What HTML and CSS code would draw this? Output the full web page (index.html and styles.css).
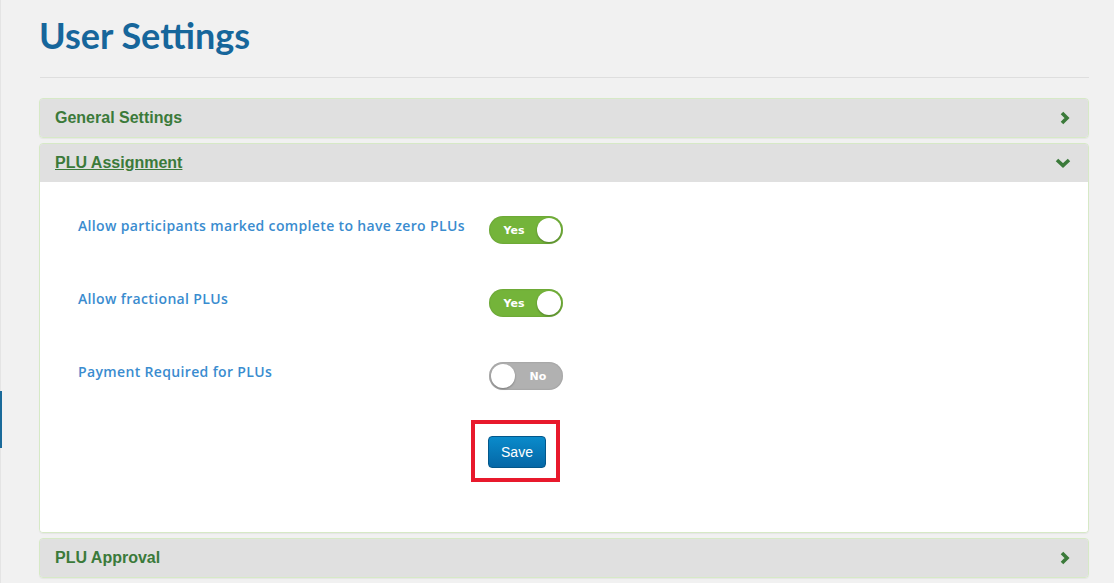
FILE: index.html
```html
<!DOCTYPE html>
<html lang="en">
<head>
  <meta charset="UTF-8" />
  <meta name="viewport" content="width=device-width, initial-scale=1.0"/>
  <title>User Settings</title>
  <link rel="stylesheet" href="styles.css">
</head>
<body>
  <div class="side-marker"></div>
  <div class="page">
    <h1>User Settings</h1>
    <hr class="divider">

    <div class="panel">
      <div class="panel-heading">
        <span class="panel-title">General Settings</span>
        <svg class="chevron" width="12" height="14" viewBox="0 0 12 14"><polyline points="3,2 8,7 3,12" fill="none" stroke="#3b7a3a" stroke-width="3.6"/></svg>
      </div>
    </div>

    <div class="panel">
      <div class="panel-heading">
        <span class="panel-title open">PLU Assignment</span>
        <svg class="chevron" width="16" height="12" viewBox="0 0 16 12"><polyline points="2,3 8,8.5 14,3" fill="none" stroke="#3b7a3a" stroke-width="3.6"/></svg>
      </div>
      <div class="panel-body">
        <div class="setting">
          <span class="setting-label">Allow participants marked complete to have zero PLUs</span>
          <div class="toggle on"><span class="toggle-text">Yes</span><span class="knob"></span></div>
        </div>
        <div class="setting">
          <span class="setting-label">Allow fractional PLUs</span>
          <div class="toggle on"><span class="toggle-text">Yes</span><span class="knob"></span></div>
        </div>
        <div class="setting">
          <span class="setting-label">Payment Required for PLUs</span>
          <div class="toggle off"><span class="knob"></span><span class="toggle-text">No</span></div>
        </div>
        <div class="actions">
          <div class="highlight">
            <button class="btn-save">Save</button>
          </div>
        </div>
      </div>
    </div>

    <div class="panel">
      <div class="panel-heading">
        <span class="panel-title">PLU Approval</span>
        <svg class="chevron" width="12" height="14" viewBox="0 0 12 14"><polyline points="3,2 8,7 3,12" fill="none" stroke="#3b7a3a" stroke-width="3.6"/></svg>
      </div>
    </div>
  </div>
</body>
</html>
```

FILE: styles.css
```css
body {
  margin: 0;
  background: #f1f1f1;
  font-family: 'Liberation Sans', Arial, sans-serif;
  border-left: 1px solid #e4e4e4;
}
.side-marker {
  position: absolute;
  left: 0;
  top: 391px;
  width: 2px;
  height: 57px;
  background: #1a6a9a;
}
.page {
  padding: 0 25px 0 38px;
}
h1 {
  font-family: Lato, sans-serif;
  font-weight: bold;
  font-size: 36px;
  color: #16669b;
  margin: 0;
  padding: 12px 0 0 0;
  line-height: 46px;
}
.divider {
  border: none;
  border-top: 1px solid #dedede;
  margin: 19px 0 20px 1px;
}
.panel {
  border: 1px solid #d6e9c6;
  border-radius: 4px;
  margin-bottom: 5px;
  overflow: hidden;
  box-shadow: 0 1px 1px rgba(0, 0, 0, 0.05);
}
.panel-heading {
  background: #e0e0e0;
  height: 38px;
  display: flex;
  align-items: center;
  justify-content: space-between;
  padding: 0 15px;
}
.panel-title {
  font-size: 16px;
  font-weight: bold;
  color: #3b7a3a;
}
.panel-title.open {
  text-decoration: underline;
}
.chevron {
  margin-right: 2px;
}
.panel-body {
  background: #fff;
  padding: 34px 38px 50px 38px;
}
.setting {
  display: flex;
  align-items: flex-start;
  height: 73px;
}
.setting-label {
  width: 411px;
  font-family: 'Open Sans', sans-serif;
  font-weight: 600;
  font-size: 14px;
  letter-spacing: 0.35px;
  line-height: 16px;
  padding-top: 2px;
  color: #3a8ccf;
}
.toggle {
  width: 74px;
  height: 28px;
  border-radius: 14px;
  display: flex;
  align-items: center;
  box-sizing: border-box;
  padding: 0 2px;
  box-shadow: inset 0 0 2px rgba(0, 0, 0, 0.2);
}
.toggle.on {
  background: #74b43a;
}
.toggle.off {
  background: #b1b1b1;
}
.toggle-text {
  flex: 1;
  text-align: center;
  color: #fff;
  font-family: 'DejaVu Sans', sans-serif;
  font-weight: bold;
  font-size: 11px;
}
.knob {
  width: 24px;
  height: 24px;
  border-radius: 50%;
  background: #fff;
  box-shadow: 0 1px 2px rgba(0, 0, 0, 0.3);
}
.actions {
  padding-left: 393px;
  margin-top: -15px;
}
.highlight {
  display: inline-block;
  border: 4px solid #e8192c;
  padding: 12px 10px 10px 13px;
}
.btn-save {
  display: block;
  width: 58px;
  height: 32px;
  border: 1px solid #03578a;
  border-radius: 4px;
  background: linear-gradient(#0a8bcb, #0567a6);
  color: #fff;
  font-family: 'Liberation Sans', Arial, sans-serif;
  font-size: 14px;
  cursor: pointer;
}
```
